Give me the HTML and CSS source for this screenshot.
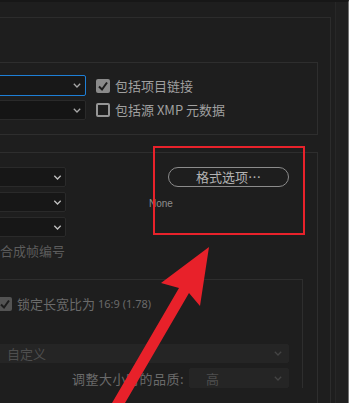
FILE: index.html
```html
<!DOCTYPE html>
<html lang="zh-CN">
<head>
    <meta charset="UTF-8">
    <meta name="viewport" content="width=device-width, initial-scale=1.0">
    <title>导出设置</title>
    <link rel="stylesheet" href="styles.css">
</head>
<body>
    <div class="window">
        <div class="pane">
            <section class="group group-export">
                <div class="row">
                    <div class="select focus">
                        <svg class="chev" viewBox="0 0 8 5"><polyline points="0.8,0.8 4,4 7.2,0.8"/></svg>
                    </div>
                    <label class="check"><span class="box on"><svg viewBox="0 0 14 14"><polyline points="3,7.5 6,10.5 11,3.5"/></svg></span>包括项目链接</label>
                </div>
                <div class="row">
                    <div class="select">
                        <svg class="chev" viewBox="0 0 8 5"><polyline points="0.8,0.8 4,4 7.2,0.8"/></svg>
                    </div>
                    <label class="check"><span class="box"></span>包括源 XMP 元数据</label>
                </div>
            </section>

            <section class="group group-video">
                <div class="video-top">
                    <div class="selects">
                        <div class="select small"><svg class="chev" viewBox="0 0 8 5"><polyline points="0.8,0.8 4,4 7.2,0.8"/></svg></div>
                        <div class="select small"><svg class="chev" viewBox="0 0 8 5"><polyline points="0.8,0.8 4,4 7.2,0.8"/></svg></div>
                        <div class="select small"><svg class="chev" viewBox="0 0 8 5"><polyline points="0.8,0.8 4,4 7.2,0.8"/></svg></div>
                    </div>
                    <div class="format">
                        <button class="pill">格式选项…</button>
                        <span class="none">None</span>
                    </div>
                </div>
                <div class="frame-num">合成帧编号</div>

                <section class="group group-size">
                    <label class="check dim"><span class="box on"><svg viewBox="0 0 14 14"><polyline points="3,7.5 6,10.5 11,3.5"/></svg></span>锁定长宽比为 <small>16:9 (1.78)</small></label>
                    <div class="select wide disabled">
                        <span>自定义</span>
                        <svg class="chev" viewBox="0 0 8 5"><polyline points="0.8,0.8 4,4 7.2,0.8"/></svg>
                    </div>
                    <div class="quality">
                        <span class="q-label">调整大小时的品质:</span>
                        <div class="select disabled q-select">
                            <span>高</span>
                            <svg class="chev" viewBox="0 0 8 5"><polyline points="0.8,0.8 4,4 7.2,0.8"/></svg>
                        </div>
                    </div>
                </section>
            </section>
        </div>
        <div class="side"></div>
    </div>

    <div class="highlight"></div>
    <svg class="arrow" viewBox="0 0 349 403">
        <polygon points="209,247 161,283 179,288 112,403 125,403 189,293 200,306"/>
    </svg>
</body>
</html>
```

FILE: styles.css
```css
* {
    margin: 0;
    padding: 0;
    box-sizing: border-box;
}

body {
    width: 349px;
    height: 403px;
    overflow: hidden;
    background-color: #1e1e1e;
    color: #a0a0a0;
    font-family: "Noto Sans CJK SC", "Noto Sans", sans-serif;
    font-size: 13px;
    position: relative;
}

.window {
    display: flex;
    height: 403px;
    border-top: 2px solid #171717;
    border-right: 1px solid #747474;
}

.pane {
    width: 331px;
    margin-top: 15px;
    border-top: 1px solid #2c2c2c;
    border-right: 1px solid #2c2c2c;
    padding: 44px 12px 0 0;
}

.side {
    flex: 1;
    margin-left: 4px;
    border-left: 1px solid #272727;
    background-color: #202020;
}

.group {
    border-top: 1px solid #2e2e2e;
    border-right: 1px solid #2e2e2e;
}

.group-export {
    border-bottom: 1px solid #2e2e2e;
    padding: 12px 0 14px 0;
    margin-bottom: 17px;
    display: flex;
    flex-direction: column;
    gap: 4px;
}

.row {
    display: flex;
    align-items: center;
}

.select {
    position: relative;
    display: flex;
    align-items: center;
    justify-content: flex-end;
    height: 20px;
    background-color: #151515;
    border: 1px solid #2a2a2a;
    border-radius: 2px;
    padding-right: 4px;
}

.group-export .select {
    width: 106px;
    margin-left: -20px;
}

.select.focus {
    height: 21px;
    border-color: #1e7fd6;
    background-color: #181818;
}

.chev {
    width: 8px;
    height: 5px;
    fill: none;
    stroke: #a8a8a8;
    stroke-width: 1.3;
}

.check {
    display: flex;
    align-items: center;
    line-height: 18px;
    white-space: nowrap;
}

.group-export .check {
    margin-left: 10px;
}

.box {
    width: 14px;
    height: 14px;
    margin-right: 5px;
    border: 2px solid #969696;
    border-radius: 2px;
    flex-shrink: 0;
}

.box.on {
    border: none;
    background-color: #8a8a8a;
}

.box svg {
    display: block;
    width: 14px;
    height: 14px;
    fill: none;
    stroke: #1c1c1c;
    stroke-width: 2;
}

.group-video {
    padding: 14px 14px 0 0;
    height: 260px;
}

.video-top {
    display: flex;
}

.selects {
    display: flex;
    flex-direction: column;
    gap: 5px;
}

.select.small {
    width: 86px;
    margin-left: -20px;
    background-color: #171717;
    padding-right: 3px;
}

.select.small .chev {
    width: 9px;
    stroke: #c0c0c0;
}

.format {
    margin-left: 83px;
    display: flex;
    flex-direction: column;
    align-items: flex-start;
}

.pill {
    margin-left: 19px;
    width: 121px;
    height: 20px;
    border: 1px solid #8c8c8c;
    border-radius: 10px;
    background: transparent;
    color: #b4b4b4;
    font-family: inherit;
    font-size: 13px;
    line-height: 18px;
}

.none {
    margin-top: 11px;
    font-family: "Liberation Sans", sans-serif;
    font-size: 10px;
    line-height: 12px;
    color: #8e8e8e;
}

.frame-num {
    margin: 6px 0 0 0;
    line-height: 16px;
    color: #5c5c5c;
    white-space: nowrap;
}

.group-size {
    margin-top: 20px;
    padding: 15px 13px 0 0;
}

.check.dim {
    color: #6a6a6a;
    margin-left: -2px;
}

.check.dim .box.on {
    background-color: #535353;
}

.check.dim small {
    font-family: "Noto Sans", sans-serif;
    font-size: 11px;
    margin-left: 3px;
}

.select.disabled {
    background-color: #252525;
    border-color: #252525;
    color: #4e4e4e;
    justify-content: space-between;
    padding-left: 16px;
    padding-right: 6px;
}

.select.disabled .chev {
    stroke: #444444;
}

.select.wide {
    margin: 31px 0 0 -10px;
    height: 19px;
}

.quality {
    display: flex;
    justify-content: flex-end;
    align-items: center;
    gap: 5px;
    margin-top: 5px;
}

.q-label {
    color: #6a6a6a;
    letter-spacing: 0.5px;
}

.q-select {
    width: 100px;
    padding-left: 8px;
}

.highlight {
    position: absolute;
    left: 153px;
    top: 146px;
    width: 152px;
    height: 89px;
    border: 2px solid #e8222b;
}

.arrow {
    position: absolute;
    left: 0;
    top: 0;
    width: 349px;
    height: 403px;
    fill: #e8212a;
}
```
